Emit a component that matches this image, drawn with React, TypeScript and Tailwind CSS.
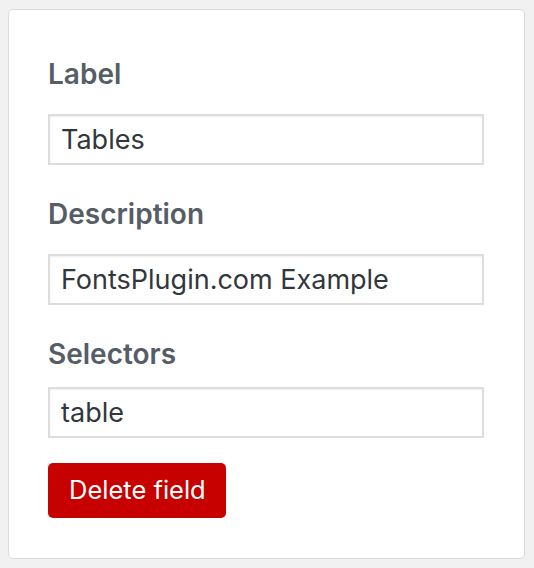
import React from 'react'

type Field = { label: string; value: string; gap: string }

const fields: Field[] = [
  { label: 'Label', value: 'Tables', gap: 'mb-[26px]' },
  { label: 'Description', value: 'FontsPlugin.com Example', gap: 'mb-[26px]' },
  { label: 'Selectors', value: 'table', gap: 'mb-[19px]' },
]

function App(): React.ReactElement {
  return (
    <div className="min-h-[568px] w-[534px] bg-[#f1f1f1] pt-[9px] pl-[8px] font-['Inter','Liberation_Sans',sans-serif]">
      <div className="w-[517px] rounded-[5px] border border-[#dcdcdc] bg-white px-[39px] pt-[50px] pb-[40px]">
        {fields.map((f, i) => (
          <div key={f.label} className={i > 0 ? 'mt-[35px]' : ''}>
            <div className={`text-[28px] leading-[28px] font-semibold text-[#555d66] ${f.gap}`}>
              {f.label}
            </div>
            <input
              type="text"
              readOnly
              value={f.value}
              className="block h-[51px] w-[436px] border-2 border-[#dddddd] bg-white px-[11px] text-[27px] text-[#32373c] shadow-[inset_0_1px_2px_rgba(0,0,0,0.07)] outline-none"
            />
          </div>
        ))}
        <button
          type="button"
          className="mt-[25px] h-[55px] w-[178px] rounded-[5px] bg-[#c70000] text-left pl-[21px] text-[25.5px] text-white"
        >
          Delete field
        </button>
      </div>
    </div>
  )
}

export default App
